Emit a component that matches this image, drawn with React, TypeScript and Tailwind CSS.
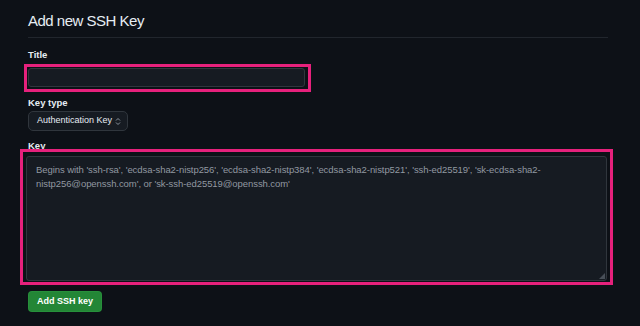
import React from "react";

export default function App() {
  return (
    <div
      className="w-[640px] h-[326px] overflow-hidden bg-[#0d1117] text-[#e6edf3]"
      style={{ fontFamily: '"Liberation Sans", Arial, sans-serif' }}
    >
      <div className="pl-[28px] pr-[32px] pt-[11px]">
        <h1 className="text-[15px] leading-[20px] font-normal tracking-[-0.5px] pb-[6px] border-b border-[#21262d]">
          Add new SSH Key
        </h1>
      </div>

      <div className="pl-[28px] pt-[11px]">
        <label className="block text-[9.5px] font-bold leading-[12px]">Title</label>
      </div>
      <div className="ml-[24px] mt-[3px] w-[287px] h-[28px] border-[3px] border-[#e6217c] pl-px pt-px">
        <div className="w-[277px] h-[19px] rounded-[3px] border border-[#30363d] bg-[#161b22]" />
      </div>

      <div className="pl-[28px] pt-[5px]">
        <label className="block text-[9.5px] font-bold leading-[12px]">Key type</label>
        <div className="mt-[2px] w-[100px] h-[20px] rounded-[5px] border border-[#30363d] bg-[#161b22] flex items-center pl-[8px] pr-[6px] justify-between">
          <span className="text-[9px] text-[#e6edf3]">Authentication Key</span>
          <svg width="6" height="9" viewBox="0 0 6 9" className="text-[#8b949e]">
            <path d="M1 3.5 L3 1.5 L5 3.5" fill="none" stroke="currentColor" strokeWidth="1" />
            <path d="M1 5.5 L3 7.5 L5 5.5" fill="none" stroke="currentColor" strokeWidth="1" />
          </svg>
        </div>
      </div>

      <div className="pl-[28px] pt-[9px]">
        <label className="block text-[9.5px] font-bold leading-[12px]">Key</label>
      </div>
      <div className="relative ml-[20px] -mt-[3px] w-[593px] h-[136px] border-[3px] border-[#e6217c] pl-[3px] pt-[4px]">
        <div className="relative w-[581px] h-[125px] rounded-[3px] border border-[#30363d] bg-[#161b22] px-[9px] pt-[6px]">
          <p className="text-[9.5px] leading-[14px] tracking-[-0.07px] text-[#9198a1]">
            Begins with 'ssh-rsa', 'ecdsa-sha2-nistp256', 'ecdsa-sha2-nistp384', 'ecdsa-sha2-nistp521', 'ssh-ed25519', 'sk-ecdsa-sha2-
            <br />
            nistp256@openssh.com', or 'sk-ssh-ed25519@openssh.com'
          </p>
          <svg width="6" height="6" viewBox="0 0 6 6" className="absolute right-[1px] bottom-[1px] text-[#484f58]">
            <path d="M6 0 L6 6 L0 6 Z" fill="currentColor" />
          </svg>
        </div>
      </div>

      <div className="pl-[28px] pt-[6px]">
        <button className="w-[74px] h-[21px] rounded-[4px] bg-[#238636] border border-[#2ea043]/40 text-white text-[9px] font-bold flex items-center justify-center">
          Add SSH key
        </button>
      </div>
    </div>
  );
}
